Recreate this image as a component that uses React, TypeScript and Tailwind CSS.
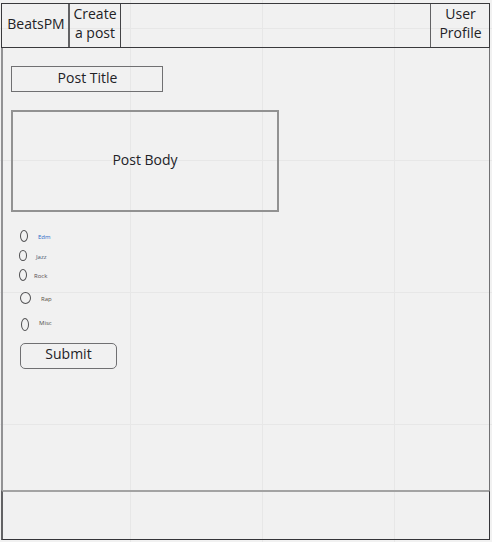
const genres = [
  { name: "Edm", row: "h-[20px] pl-[17px]", oval: "w-[8px] h-[12px]", gap: "ml-[10px] mt-[2px]", label: "text-[#2f69c8]" },
  { name: "Jazz", row: "h-[19px] pl-[16px]", oval: "w-[8px] h-[11px]", gap: "ml-[9px] mt-[2px]", label: "text-[#46526a]" },
  { name: "Rock", row: "h-[20px] pl-[16px]", oval: "w-[8px] h-[12px]", gap: "ml-[7px] mt-[2px]", label: "text-[#564a50]" },
  { name: "Rap", row: "h-[25px] pl-[17px]", oval: "w-[11px] h-[12px]", gap: "ml-[10px] mt-[2px]", label: "text-[#564f42]" },
  { name: "Misc", row: "h-[29px] pl-[18px]", oval: "w-[8px] h-[13px]", gap: "ml-[10px] -mt-[4px]", label: "text-[#505049]" },
];

export default function App() {
  return (
    <div className="h-[542px] w-[492px] overflow-hidden bg-[#f1f1f1] bg-[linear-gradient(to_right,#e7e7e7_1px,transparent_1px),linear-gradient(to_bottom,#e7e7e7_1px,transparent_1px)] bg-[size:132px_132px] bg-[position:130px_28px] pl-px pt-[3px] font-['Open_Sans',sans-serif] text-[14px] leading-[19px] text-[#222226]">
      <div className="flex h-[537px] w-[489px] flex-col">
        <header className="flex h-[45px] shrink-0 justify-between border border-[#39393c]">
          <div className="flex">
            <div className="flex w-[68px] items-center justify-center border-r-2 border-[#626264] pb-[4px] pl-[2px]">
              BeatsPM
            </div>
            <div className="w-[51px] border-r border-[#444447] text-center">
              Create
              <br />a post
            </div>
          </div>
          <div className="w-[59px] border-l border-[#626264] pl-px text-center">
            User
            <br />
            Profile
          </div>
        </header>

        <main className="flex h-[442px] shrink-0 flex-col items-start border-l-2 border-r border-[#929294] border-r-[#717173]">
          <div className="ml-[8px] mt-[18px] flex h-[26px] w-[152px] items-center justify-center border border-[#707072] pb-[3px] pl-px">
            Post Title
          </div>
          <div className="ml-[8px] mt-[18px] flex h-[102px] w-[268px] items-center justify-center border-2 border-[#929292] pb-[4px]">
            Post Body
          </div>
          <div className="mt-[14px] flex flex-col">
            {genres.map((g) => (
              <label key={g.name} className={`flex items-center ${g.row}`}>
                <span className={`rounded-[50%] border border-[#505052] ${g.oval}`} />
                <span className={`text-[6px] leading-[8px] ${g.gap} ${g.label}`}>{g.name}</span>
              </label>
            ))}
          </div>
          <button className="ml-[17px] mt-[4px] flex h-[26px] w-[97px] items-center justify-center rounded-[5px] border border-[#707072] pb-[5px]">
            Submit
          </button>
        </main>

        <footer className="h-[50px] shrink-0 border border-l-2 border-t-2 border-[#343438] border-l-[#626264] border-t-[#a3a3a3]" />
      </div>
    </div>
  );
}
